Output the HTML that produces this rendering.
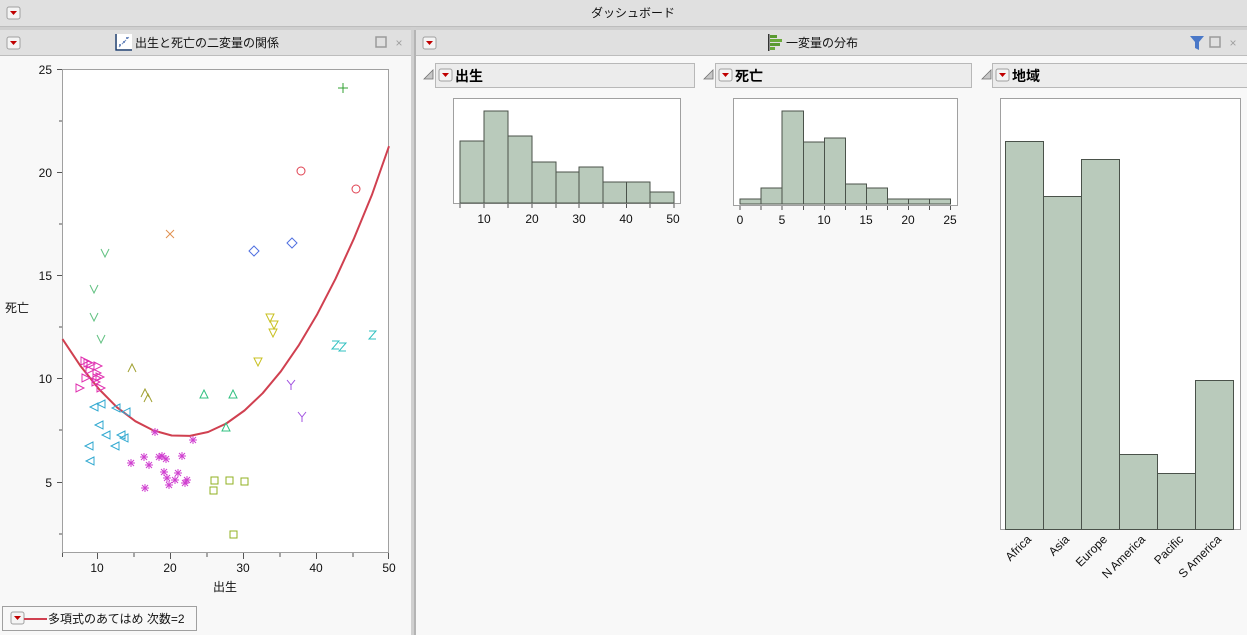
<!DOCTYPE html>
<html><head><meta charset="utf-8"><style>
html,body{margin:0;padding:0;width:1247px;height:635px;overflow:hidden;background:#f8f8f8}
svg{display:block}
text{font-family:"Liberation Sans","Noto Sans CJK JP",sans-serif}
</style></head><body>
<svg width="1247" height="635" viewBox="0 0 1247 635" xmlns="http://www.w3.org/2000/svg">
<defs>
<g id="btn"><rect x="0" y="0" width="13" height="12" rx="2" fill="#f4f4f4" stroke="#a0a0a0"/><path d="M3 4 L10 4 L6.5 8 Z" fill="#c00000"/></g>
<g id="tri"><path d="M0 9 L9 0 L9 9 Z" fill="#c8c8c8" stroke="#707070" stroke-width="0.8"/></g>
</defs>
<rect width="1247" height="635" fill="#f8f8f8"/>
<rect x="0" y="0" width="1247" height="27" fill="#e0e0e0"/>
<line x1="0" y1="26.5" x2="1247" y2="26.5" stroke="#bdbdbd"/>
<use href="#btn" x="7" y="7"/>
<text x="633" y="17" font-size="12" text-anchor="middle" fill="#111">ダッシュボード</text>
<rect x="0" y="27" width="1247" height="3" fill="#cfcfcf"/>
<rect x="411" y="27" width="5" height="608" fill="#d0d0d0"/>
<rect x="414" y="30" width="2" height="605" fill="#b4b4b4"/>
<rect x="0" y="30" width="411" height="26" fill="#e0e0e0"/>
<line x1="0" y1="55.5" x2="411" y2="55.5" stroke="#bdbdbd"/>
<use href="#btn" x="7" y="37"/>
<g transform="translate(115,34)"><rect x="0" y="0" width="17" height="17" fill="#fff"/><path d="M1 0 V16 H17" stroke="#1a3a6a" stroke-width="1.5" fill="none"/><path d="M4 13 L15 2" stroke="#7090c0" stroke-dasharray="2 2"/><circle cx="5" cy="11" r="1" fill="#5070b0"/><circle cx="9" cy="8" r="1" fill="#5070b0"/><circle cx="12" cy="4" r="1" fill="#5070b0"/></g>
<text x="135" y="47" font-size="12" fill="#111">出生と死亡の二変量の関係</text>
<rect x="376" y="37" width="10" height="10" fill="none" stroke="#9a9a9a" stroke-width="1.5"/>
<text x="399" y="47" font-size="12" fill="#a0a0a0" text-anchor="middle">×</text>
<rect x="416" y="30" width="831" height="26" fill="#e0e0e0"/>
<line x1="416" y1="55.5" x2="1247" y2="55.5" stroke="#bdbdbd"/>
<use href="#btn" x="423" y="37"/>
<g transform="translate(768,34)"><rect x="0" y="0" width="1.5" height="17" fill="#333"/><rect x="2" y="1" width="7" height="3" fill="#5a9a30"/><rect x="2" y="5" width="12" height="3" fill="#6aaa3a"/><rect x="2" y="9" width="10" height="3" fill="#5a9a30"/><rect x="2" y="13" width="5" height="3" fill="#6aaa3a"/></g>
<text x="786" y="47" font-size="12" fill="#111">一変量の分布</text>
<path d="M1190 36 H1204 L1199 42 V50 L1195 48 V42 Z" fill="#4a78c8"/>
<rect x="1210" y="37" width="10" height="10" fill="none" stroke="#9a9a9a" stroke-width="1.5"/>
<text x="1233" y="47" font-size="12" fill="#a0a0a0" text-anchor="middle">×</text>

<rect x="62.5" y="69.5" width="326" height="483" fill="#fff" stroke="#a0a0a0"/>
<g stroke="#555" stroke-width="1">
<line x1="57" y1="69.5" x2="62" y2="69.5"/><line x1="59" y1="121" x2="62" y2="121"/>
<line x1="57" y1="172.5" x2="62" y2="172.5"/><line x1="59" y1="224" x2="62" y2="224"/>
<line x1="57" y1="275.5" x2="62" y2="275.5"/><line x1="59" y1="327" x2="62" y2="327"/>
<line x1="57" y1="378.5" x2="62" y2="378.5"/><line x1="59" y1="430" x2="62" y2="430"/>
<line x1="57" y1="482.5" x2="62" y2="482.5"/><line x1="59" y1="534" x2="62" y2="534"/>
<line x1="62.5" y1="553" x2="62.5" y2="557"/><line x1="97.5" y1="553" x2="97.5" y2="559"/>
<line x1="134" y1="553" x2="134" y2="557"/><line x1="170.5" y1="553" x2="170.5" y2="559"/>
<line x1="207" y1="553" x2="207" y2="557"/><line x1="243.5" y1="553" x2="243.5" y2="559"/>
<line x1="280" y1="553" x2="280" y2="557"/><line x1="316.5" y1="553" x2="316.5" y2="559"/>
<line x1="353" y1="553" x2="353" y2="557"/><line x1="388.5" y1="553" x2="388.5" y2="559"/>
</g>
<g font-size="12" fill="#111" text-anchor="end">
<text x="52" y="74">25</text><text x="52" y="177">20</text><text x="52" y="280">15</text><text x="52" y="383">10</text><text x="52" y="487">5</text>
</g>
<g font-size="12" fill="#111" text-anchor="middle">
<text x="97" y="572">10</text><text x="170" y="572">20</text><text x="243" y="572">30</text><text x="316" y="572">40</text><text x="389" y="572">50</text>
<text x="225" y="591">出生</text>
</g>
<text x="5" y="312" font-size="12" fill="#111">死亡</text>
<polyline points="62.5,339.1 80.7,366.3 98.9,389 117.1,407.4 135.3,421.2 153.5,430.5 171.7,435.5 189.9,435.9 208.1,432 226.3,423.5 244.5,410.5 262.7,393.2 280.9,371.3 299.1,344.8 317.3,314.1 335.5,278.8 353.7,239.1 371.9,194.9 389,146.2" fill="none" stroke="#d04050" stroke-width="2" stroke-linejoin="round"/>
<g fill="none" stroke-width="1">
<path d="M338 88 H348 M343 83 V93" stroke="#30a030"/>
<circle cx="301" cy="171" r="4" stroke="#e04050"/><circle cx="356" cy="189" r="4" stroke="#e04050"/>
<path d="M166 230 L174 238 M174 230 L166 238" stroke="#e09050"/>
<path d="M254 246 L259 251 L254 256 L249 251 Z M292 238 L297 243 L292 248 L287 243 Z" stroke="#5070e0"/>
<g stroke="#60c080"><path d="M101 249 L105 257 L109 249"/><path d="M90 285 L94 293 L98 285"/><path d="M90 313 L94 321 L98 313"/><path d="M97 335 L101 343 L105 335"/></g>
<g stroke="#c8c020"><path d="M266 314 H274 L270 322 Z"/><path d="M270 321 H278 L274 329 Z"/><path d="M269 329 H277 L273 337 Z"/><path d="M254 358 H262 L258 366 Z"/></g>
<g stroke="#30c0c0"><path d="M332 341 H339 L332 349 H339"/><path d="M339 343 H346 L339 351 H346"/><path d="M369 331 H376 L369 339 H376"/></g>
<g stroke="#a050e0"><path d="M287 380 L291 385 L295 380 M291 385 V390"/><path d="M298 412 L302 417 L306 412 M302 417 V422"/></g>
<g stroke="#a0a030"><path d="M128 372 L132 364 L136 372"/><path d="M141 397 L145 389 L149 397"/><path d="M144 402 L148 394 L152 402"/></g>
<g stroke="#30c080"><path d="M200 398 L204 390 L208 398 Z"/><path d="M229 398 L233 390 L237 398 Z"/><path d="M222 431 L226 423 L230 431 Z"/></g>
<g stroke="#e030b0"><path d="M81 357 L89 361 L81 365 Z"/><path d="M84 359 L92 363 L84 367 Z"/><path d="M87 360 L95 364 L87 368 Z"/><path d="M94 362 L102 366 L94 370 Z"/><path d="M93 369 L101 373 L93 377 Z"/><path d="M93 374 L101 378 L93 382 Z"/><path d="M92 378 L100 382 L92 386 Z"/><path d="M82 374 L90 378 L82 382 Z"/><path d="M96 373 L104 377 L96 381 Z"/><path d="M76 384 L84 388 L76 392 Z"/><path d="M97 384 L105 388 L97 392 Z"/><path d="M86 366 L94 370 L86 374 Z"/></g>
<g stroke="#30a8d0"><path d="M98 403 L90 407 L98 411 Z"/><path d="M105 400 L97 404 L105 408 Z"/><path d="M120 404 L112 408 L120 412 Z"/><path d="M130 408 L122 412 L130 416 Z"/><path d="M103 421 L95 425 L103 429 Z"/><path d="M110 431 L102 435 L110 439 Z"/><path d="M125 431 L117 435 L125 439 Z"/><path d="M128 434 L120 438 L128 442 Z"/><path d="M119 442 L111 446 L119 450 Z"/><path d="M93 442 L85 446 L93 450 Z"/><path d="M94 457 L86 461 L94 465 Z"/></g>
<g stroke="#d040d0">
<path id="st" d="M-4 0 H4 M0 -4 V4 M-3 -3 L3 3 M3 -3 L-3 3" transform="translate(155,432)"/>
<use href="#st" x="38" y="8"/><use href="#st" x="-24" y="31"/><use href="#st" x="-11" y="25"/><use href="#st" x="-6" y="33"/><use href="#st" x="4" y="25"/><use href="#st" x="7" y="24"/><use href="#st" x="11" y="27"/><use href="#st" x="27" y="24"/><use href="#st" x="9" y="40"/><use href="#st" x="23" y="41"/><use href="#st" x="20" y="48"/><use href="#st" x="14" y="53"/><use href="#st" x="32" y="48"/><use href="#st" x="30" y="51"/><use href="#st" x="-10" y="56"/><use href="#st" x="12" y="46"/>
</g>
<g stroke="#90b020"><rect x="211" y="477" width="7" height="7"/><rect x="210" y="487" width="7" height="7"/><rect x="226" y="477" width="7" height="7"/><rect x="241" y="478" width="7" height="7"/><rect x="230" y="531" width="7" height="7"/></g>
</g>
<rect x="2.5" y="606.5" width="194" height="24" fill="#f8f8f8" stroke="#a0a0a0"/>
<use href="#btn" x="11" y="612"/>
<line x1="24" y1="619" x2="47" y2="619" stroke="#d04050" stroke-width="2"/>
<text x="48" y="623" font-size="12" fill="#111">多項式のあてはめ 次数=2</text>

<use href="#tri" x="424" y="70"/>
<rect x="435.5" y="63.5" width="259" height="24" fill="#ececec" stroke="#b8b8b8"/>
<use href="#btn" x="439" y="69"/>
<text x="455" y="81" font-size="14" font-weight="bold" fill="#000">出生</text>
<use href="#tri" x="704" y="70"/>
<rect x="715.5" y="63.5" width="256" height="24" fill="#ececec" stroke="#b8b8b8"/>
<use href="#btn" x="719" y="69"/>
<text x="735" y="81" font-size="14" font-weight="bold" fill="#000">死亡</text>
<use href="#tri" x="982" y="70"/>
<rect x="992.5" y="63.5" width="260" height="24" fill="#ececec" stroke="#b8b8b8"/>
<use href="#btn" x="996" y="69"/>
<text x="1012" y="81" font-size="14" font-weight="bold" fill="#000">地域</text>

<rect x="453.5" y="98.5" width="227" height="105" fill="#fff" stroke="#a0a0a0"/>
<g fill="#b9cabb" stroke="#4a524a">
<rect x="460" y="141" width="24" height="62"/><rect x="484" y="111" width="24" height="92"/><rect x="508" y="136" width="24" height="67"/><rect x="532" y="162" width="24" height="41"/><rect x="556" y="172" width="23" height="31"/><rect x="579" y="167" width="24" height="36"/><rect x="603" y="182" width="23.5" height="21"/><rect x="626.5" y="182" width="23.5" height="21"/><rect x="650" y="192" width="24" height="11"/>
</g>
<g stroke="#555"><line x1="460" y1="204" x2="460" y2="208"/><line x1="484" y1="204" x2="484" y2="208"/><line x1="508" y1="204" x2="508" y2="208"/><line x1="532" y1="204" x2="532" y2="208"/><line x1="556" y1="204" x2="556" y2="208"/><line x1="579" y1="204" x2="579" y2="208"/><line x1="603" y1="204" x2="603" y2="208"/><line x1="626.5" y1="204" x2="626.5" y2="208"/><line x1="650" y1="204" x2="650" y2="208"/><line x1="674" y1="204" x2="674" y2="208"/></g>
<g font-size="12" fill="#111" text-anchor="middle"><text x="484" y="223">10</text><text x="532" y="223">20</text><text x="579" y="223">30</text><text x="626" y="223">40</text><text x="673" y="223">50</text></g>

<rect x="733.5" y="98.5" width="224" height="107" fill="#fff" stroke="#a0a0a0"/>
<g fill="#b9cabb" stroke="#4a524a">
<rect x="740" y="199" width="21" height="5"/><rect x="761" y="188" width="21" height="16"/><rect x="782" y="111" width="21.5" height="93"/><rect x="803.5" y="142" width="21" height="62"/><rect x="824.5" y="138" width="21" height="66"/><rect x="845.5" y="184" width="21" height="20"/><rect x="866.5" y="188" width="21" height="16"/><rect x="887.5" y="199" width="21" height="5"/><rect x="908.5" y="199" width="21" height="5"/><rect x="929.5" y="199" width="21" height="5"/>
</g>
<g stroke="#555"><line x1="740" y1="206" x2="740" y2="210"/><line x1="761" y1="206" x2="761" y2="210"/><line x1="782" y1="206" x2="782" y2="210"/><line x1="803.5" y1="206" x2="803.5" y2="210"/><line x1="824.5" y1="206" x2="824.5" y2="210"/><line x1="845.5" y1="206" x2="845.5" y2="210"/><line x1="866.5" y1="206" x2="866.5" y2="210"/><line x1="887.5" y1="206" x2="887.5" y2="210"/><line x1="908.5" y1="206" x2="908.5" y2="210"/><line x1="929.5" y1="206" x2="929.5" y2="210"/><line x1="950.5" y1="206" x2="950.5" y2="210"/></g>
<g font-size="12" fill="#111" text-anchor="middle"><text x="740" y="224">0</text><text x="782" y="224">5</text><text x="824" y="224">10</text><text x="866" y="224">15</text><text x="908" y="224">20</text><text x="950" y="224">25</text></g>

<rect x="1000.5" y="98.5" width="240" height="431" fill="#fff" stroke="#a0a0a0"/>
<g fill="#b9cabb" stroke="#4a524a">
<rect x="1005.5" y="141.5" width="38" height="388"/><rect x="1043.5" y="196.5" width="38" height="333"/><rect x="1081.5" y="159.5" width="38" height="370"/><rect x="1119.5" y="454.5" width="38" height="75"/><rect x="1157.5" y="473.5" width="38" height="56"/><rect x="1195.5" y="380.5" width="38" height="149"/>
</g>
<g font-size="12" fill="#111" text-anchor="end">
<text transform="translate(1032,540) rotate(-45)">Africa</text>
<text transform="translate(1070,540) rotate(-45)">Asia</text>
<text transform="translate(1108,540) rotate(-45)">Europe</text>
<text transform="translate(1146,540) rotate(-45)">N America</text>
<text transform="translate(1184,540) rotate(-45)">Pacific</text>
<text transform="translate(1222,540) rotate(-45)">S America</text>
</g>
</svg>
</body></html>
